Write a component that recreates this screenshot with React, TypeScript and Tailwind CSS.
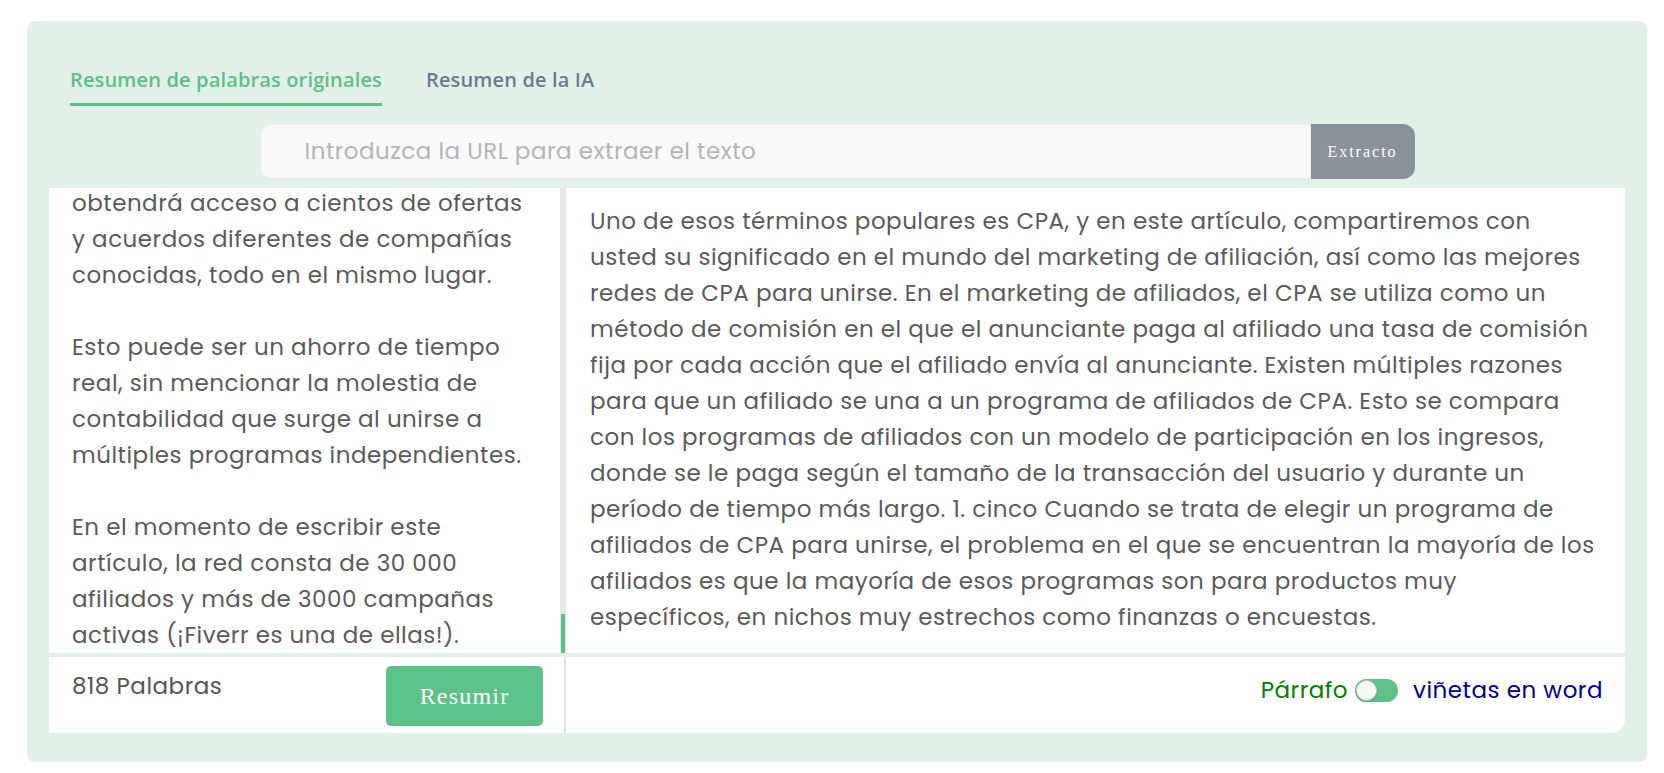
import { useState } from "react";

// Resumen — original-words summariser panel with URL extractor.

const LEFT_LINES = [
  "obtendrá acceso a cientos de ofertas",
  "y acuerdos diferentes de compañías",
  "conocidas, todo en el mismo lugar.",
  "",
  "Esto puede ser un ahorro de tiempo",
  "real, sin mencionar la molestia de",
  "contabilidad que surge al unirse a",
  "múltiples programas independientes.",
  "",
  "En el momento de escribir este",
  "artículo, la red consta de 30 000",
  "afiliados y más de 3000 campañas",
  "activas (¡Fiverr es una de ellas!).",
];

const SUMMARY_LINES = [
  "Uno de esos términos populares es CPA, y en este artículo, compartiremos con",
  "usted su significado en el mundo del marketing de afiliación, así como las mejores",
  "redes de CPA para unirse. En el marketing de afiliados, el CPA se utiliza como un",
  "método de comisión en el que el anunciante paga al afiliado una tasa de comisión",
  "fija por cada acción que el afiliado envía al anunciante. Existen múltiples razones",
  "para que un afiliado se una a un programa de afiliados de CPA. Esto se compara",
  "con los programas de afiliados con un modelo de participación en los ingresos,",
  "donde se le paga según el tamaño de la transacción del usuario y durante un",
  "período de tiempo más largo. 1. cinco Cuando se trata de elegir un programa de",
  "afiliados de CPA para unirse, el problema en el que se encuentran la mayoría de los",
  "afiliados es que la mayoría de esos programas son para productos muy",
  "específicos, en nichos muy estrechos como finanzas o encuestas.",
];

const body = "font-['Poppins','Open_Sans',sans-serif] tracking-[0.5px]";
const serif = "font-['Liberation_Serif','Times_New_Roman',serif]";

export default function App() {
  const [tab, setTab] = useState(0);
  const [bullets, setBullets] = useState(false);

  return (
    <div className="min-h-screen bg-white pt-[21px] pl-[27px]">
      <div className="w-[1620px] h-[741px] rounded-lg bg-[#e1f1e7] pt-[45px] px-[22px]">
        {/* Tabs */}
        <div className="flex gap-[44px] pl-[21px] font-['Open_Sans',sans-serif] text-[20px] font-semibold leading-[28px] tracking-[0.15px]">
          {["Resumen de palabras originales", "Resumen de la IA"].map((t, i) => (
            <button
              key={t}
              onClick={() => setTab(i)}
              className={
                tab === i
                  ? "border-b-[3px] border-[#5bbf86] pb-[9px] text-[#5bbf86]"
                  : "border-b-[3px] border-transparent pb-[9px] text-[#6a7a92]"
              }
            >
              {t}
            </button>
          ))}
        </div>

        {/* URL extractor */}
        <div className="mx-auto mt-[18px] flex h-[55px] w-[1155px]">
          <input
            placeholder="Introduzca la URL para extraer el texto"
            className={`${body} flex-1 rounded-l-[12px] border border-[#ececec] bg-[#f9f9f9] pl-[44px] text-[23px] text-[#555] outline-none placeholder:text-[#b4b4b4]`}
          />
          <button className={`${serif} w-[104px] rounded-r-[12px] bg-[#89929a] text-[16px] tracking-[2px] text-white`}>
            Extracto
          </button>
        </div>

        {/* Editor + summary */}
        <div className={`${body} mt-[9px] grid grid-cols-[517px_1fr] grid-rows-[465px_76px] gap-y-[4px] text-[#5a5a5a]`}>
          <div className="flex bg-white">
            <div className="flex-1 overflow-hidden pl-[23px] text-[23px] leading-[36px]">
              {LEFT_LINES.map((l, i) => (
                <div key={i} className={i === 0 ? "h-[33px] whitespace-nowrap leading-[30px]" : "h-[36px] whitespace-nowrap"}>
                  {l}
                </div>
              ))}
            </div>
            <div className="flex w-[6px] flex-col justify-end bg-[#e6e6e6] px-[1px]">
              <div className="h-[39px] bg-[#5bbf86]" />
            </div>
          </div>

          <div className="bg-white pl-[24px] pt-[15px] text-[23px] leading-[36px]">
            {SUMMARY_LINES.map((l, i) => (
              <div key={i} className="whitespace-nowrap">
                {l}
              </div>
            ))}
          </div>

          <div className="flex items-start justify-between border-r-2 border-[#e0e0e0] bg-white pl-[23px] pr-[21px]">
            <span className="pt-[14px] text-[23px] leading-[30px] text-[#555]">818 Palabras</span>
            <button className={`${serif} mt-[9px] h-[60px] w-[157px] rounded-[5px] bg-[#5dc288] text-[24px] tracking-[1.2px] text-white`}>
              Resumir
            </button>
          </div>

          <div className="flex items-start justify-end rounded-br-[14px] bg-white pr-[22px] pt-[18px]">
            <div className="flex items-center text-[23px] leading-[30px]">
              <span className="text-[#008000]">Párrafo</span>
              <button
                onClick={() => setBullets((b) => !b)}
                className={`ml-[7px] mr-[15px] flex h-[23px] w-[43px] items-center rounded-full bg-[#5dc288] px-[1px] ${bullets ? "justify-end" : "justify-start"}`}
              >
                <span className="h-[21px] w-[21px] rounded-full border border-[#c9c9c9] bg-[#f7f7f7] shadow-[0_1px_2px_rgba(0,0,0,0.25)]" />
              </button>
              <span className="text-[#00008b]">viñetas en word</span>
            </div>
          </div>
        </div>
      </div>
    </div>
  );
}
